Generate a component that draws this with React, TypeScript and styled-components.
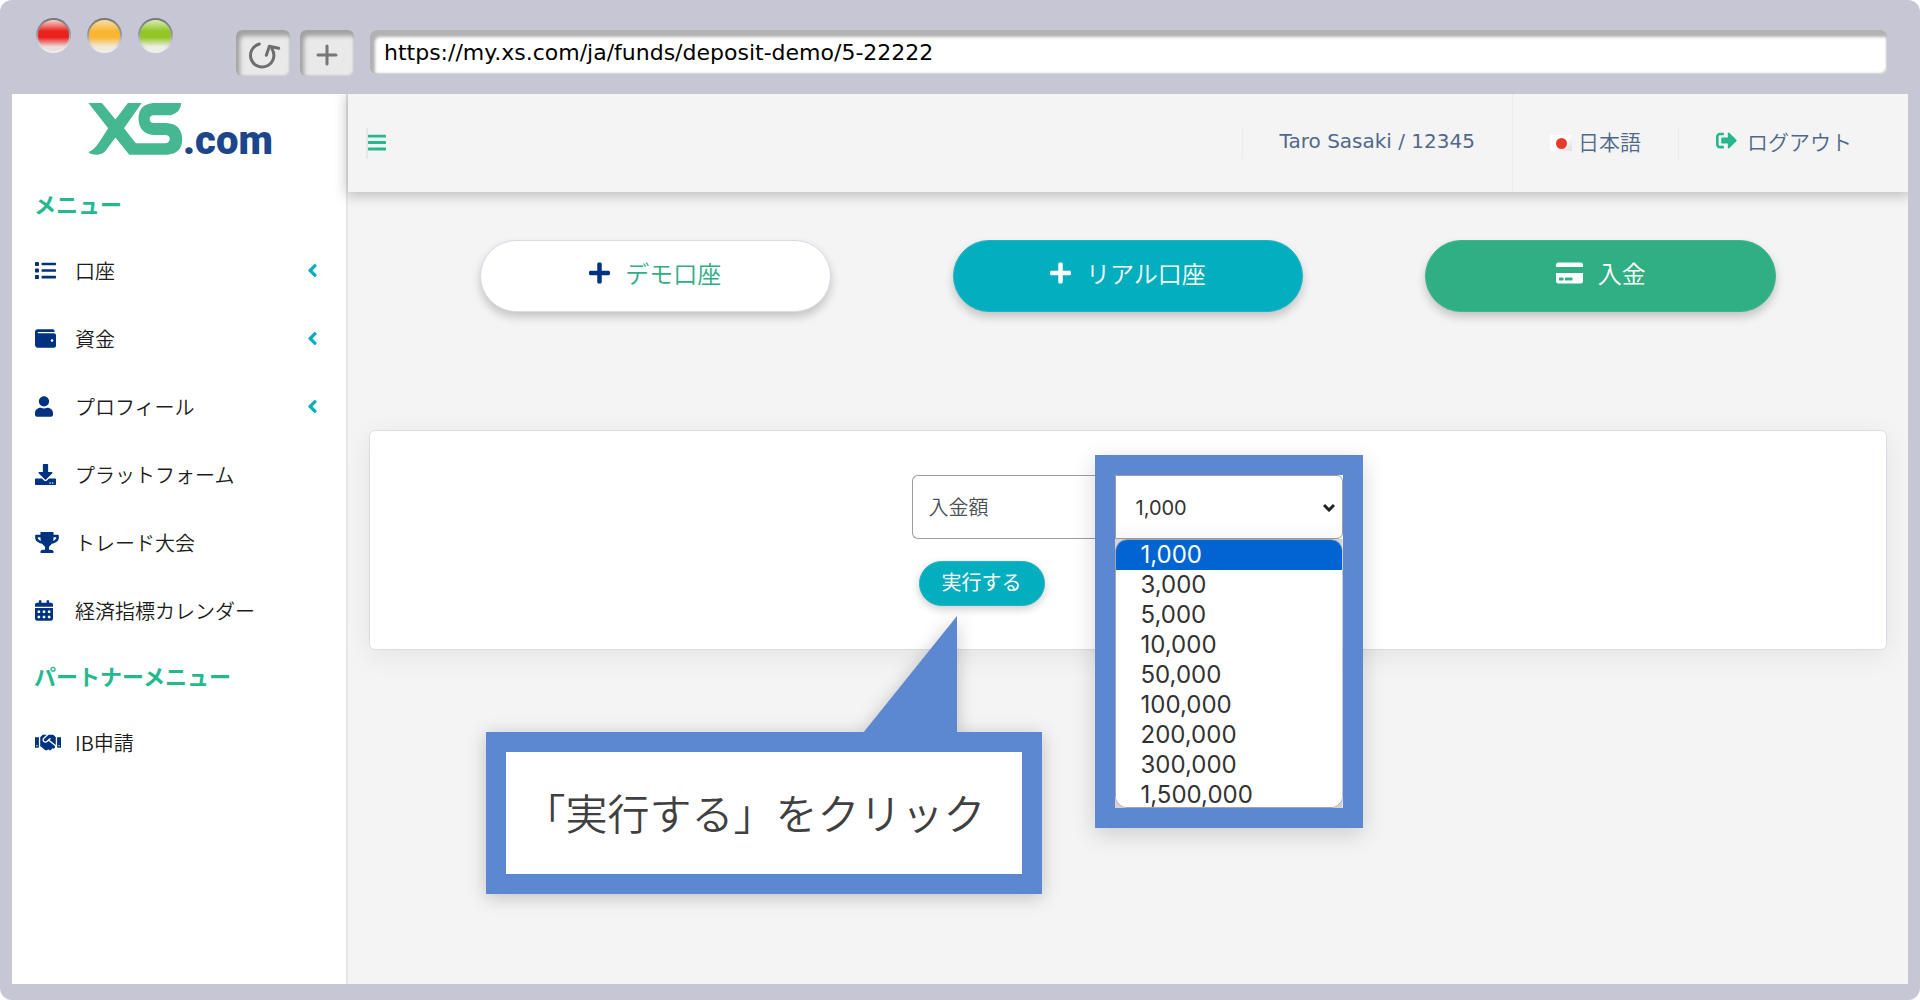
import React from "react";
import styled, { createGlobalStyle } from "styled-components";
import {
  FaAngleLeft,
  FaBars,
  FaCalendarAlt,
  FaCreditCard,
  FaDownload,
  FaHandshake,
  FaList,
  FaPlus,
  FaSignOutAlt,
  FaTrophy,
  FaUser,
  FaWallet,
} from "react-icons/fa";

const color = {
  chrome: "#c7c6d4",
  page: "#f4f4f4",
  line: "#e6e6e6",
  green: "#25b88f",
  pillGreen: "#30af84",
  teal: "#03aebf",
  navy: "#00337f",
  slate: "#51688a",
  callout: "#5c87d1",
};

const GlobalStyle = createGlobalStyle`
  *, *::before, *::after { box-sizing: border-box; }
  body {
    margin: 0;
    background: #fff;
    font-family: "DejaVu Sans", "Noto Sans CJK JP", sans-serif;
  }
  button, input, select { font: inherit; }
`;

const Browser = styled.div`
  display: flex;
  flex-direction: column;
  min-height: 100vh;
  padding: 0 12px 16px;
  background: ${color.chrome};
  border-radius: 12px;
`;

const Chrome = styled.div`
  display: flex;
  align-items: flex-start;
  height: 94px;
  padding: 18px 21px 0 24px;
`;

const Lights = styled.div`
  display: flex;
  gap: 16px;
  margin-right: 63px;
`;

const Light = styled.span<{ $top: string; $core: string; $low: string }>`
  width: 35px;
  height: 35px;
  border-radius: 50%;
  border: 2px solid transparent;
  background:
    linear-gradient(${(p) => `${p.$top}, ${p.$core} 36%, ${p.$core} 56%, ${p.$low} 86%`}) padding-box,
    linear-gradient(#777, #999 45%, #eee 90%) border-box;
`;

const ChromeButtons = styled.div`
  display: flex;
  gap: 10px;
  margin: 12px 16px 0 0;
`;

const ChromeButton = styled.button`
  display: grid;
  place-items: center;
  width: 54px;
  height: 46px;
  padding: 4px 0 0;
  border: 0;
  border-radius: 6px;
  background: #e9e9e9;
  box-shadow: inset 3px 5px 4px 1px #a2a2a4, inset -1px -1px 2px #cfcfd4;
`;

const Address = styled.input`
  flex: 1;
  min-width: 0;
  height: 44px;
  margin-top: 12px;
  padding: 0 14px;
  border: 0;
  border-radius: 6px;
  background: #fff;
  box-shadow: inset 4px 6px 3px 1px #b2b2b2, inset -1px -1px 2px #c8c8c8;
  color: #000;
  font-size: 22px;
`;

const Screen = styled.div`
  display: flex;
  flex: 1;
  overflow: hidden;
  background: ${color.page};
`;

const Sidebar = styled.aside`
  width: 336px;
  flex: none;
  background: #fff;
  border-right: 2px solid ${color.line};
`;

const Logo = styled.a`
  display: flex;
  align-items: flex-end;
  height: 78px;
  padding: 0 0 17px 76px;
  text-decoration: none;
`;

const Domain = styled.span`
  color: #1b468c;
  font-family: Roboto, "Open Sans", sans-serif;
  font-size: 40px;
  font-weight: 900;
  line-height: 28px;
`;

const MenuTitle = styled.h2`
  display: flex;
  align-items: center;
  height: 64px;
  margin: 0;
  padding: 0 0 3px 22px;
  color: ${color.green};
  font-size: 22px;
  font-weight: 700;
`;

const MenuLink = styled.a<{ $iconWidth: number }>`
  display: grid;
  grid-template-columns: 40px 1fr auto;
  align-items: center;
  height: 68px;
  padding: 0 28px 0 23px;
  color: #1c1c1c;
  font-family: "Noto Sans CJK JP", sans-serif;
  font-size: 20px;
  font-weight: 350;
  text-decoration: none;
  svg { height: 21px; }
  svg:first-child { width: ${(p) => p.$iconWidth}px; color: ${color.navy}; }
  svg:last-child { width: 11px; color: ${color.teal}; }
`;

const Content = styled.div`
  display: flex;
  flex-direction: column;
  flex: 1;
  min-width: 0;
`;

const Topbar = styled.header`
  position: relative;
  display: flex;
  align-items: center;
  height: 98px;
  padding-left: 18px;
  background: ${color.page};
  box-shadow: 0 2px 12px 2px rgba(0, 0, 0, 0.22);
  color: ${color.slate};
`;

const MenuToggle = styled.button`
  display: grid;
  place-items: center;
  height: 31px;
  margin-right: auto;
  padding: 0 0 1px;
  border: 0;
  border-left: 2px solid ${color.line};
  background: none;
  color: ${color.green};
  svg { width: 18px; height: 21px; }
`;

const BarItem = styled.div<{ $tall?: boolean }>`
  display: flex;
  align-items: center;
  height: ${(p) => (p.$tall ? "98px" : "31px")};
  padding: 0 37px 5px;
  border-left: 1px solid #ebebed;
  font-family: "Noto Sans CJK JP", sans-serif;
  font-size: 21px;
  font-weight: 350;
  white-space: nowrap;
`;

const Account = styled.span`
  font-family: "DejaVu Sans", sans-serif;
  font-size: 20px;
  font-weight: 400;
`;

const BarLink = styled.a`
  display: flex;
  align-items: center;
  gap: 10px;
  margin-right: 19px;
  color: inherit;
  text-decoration: none;
  svg { color: ${color.green}; }
`;

const Flag = styled.span`
  display: grid;
  place-items: center;
  width: 22px;
  height: 16px;
  margin: 5px 6px 0 0;
  background: linear-gradient(135deg, #fff 50%, #ddd);
  &::after {
    content: "";
    width: 11px;
    height: 11px;
    border-radius: 50%;
    background: #e63c28;
  }
`;

const Main = styled.main`
  flex: 1;
  padding: 48px 21px;
`;

const Actions = styled.div`
  display: grid;
  grid-template-columns: repeat(3, 1fr);
  margin: 0 50px 118px;
`;

const Pill = styled.button<{
  $bg: string;
  $fg: string;
  $icon: string;
  $iconWidth: number;
  $border: string;
}>`
  display: flex;
  align-items: center;
  justify-content: center;
  gap: 15px;
  height: 72px;
  margin: 0 61px;
  padding: 0 0 7px;
  border: 1px solid ${(p) => p.$border};
  border-radius: 36px;
  background: ${(p) => p.$bg};
  box-shadow: 0 5px 10px rgba(0, 0, 0, 0.2);
  color: ${(p) => p.$fg};
  font-family: "Noto Sans CJK JP", sans-serif;
  font-size: 24px;
  font-weight: 350;
  line-height: 36px;
  svg { width: ${(p) => p.$iconWidth}px; height: 24px; color: ${(p) => p.$icon}; }
`;

const Card = styled.section`
  display: flex;
  justify-content: center;
  padding: 44px 22px 43px 20px;
  border: 1px solid #dadce4;
  border-radius: 6px;
  background: #fff;
  box-shadow: 0 6px 28px rgba(0, 0, 0, 0.07);
`;

const Form = styled.form`
  position: relative;
  width: 431px;
`;

const Field = styled.div`
  display: flex;
  height: 64px;
`;

const FieldLabel = styled.label`
  display: flex;
  align-items: center;
  flex: 1;
  padding: 0 16px 2px;
  border: 1px solid #9c9c9c;
  border-right: 0;
  border-radius: 6px 0 0 6px;
  color: #495057;
  font-size: 20px;
  font-weight: 350;
`;

const SelectWrap = styled.div`
  position: relative;
  width: 228px;
`;

const Select = styled.select`
  width: 100%;
  height: 64px;
  padding: 2px 20px 0;
  border: 1px solid #9c9c9c;
  border-radius: 0 6px 6px 0;
  background: linear-gradient(#fff 78%, #f6f6f6);
  appearance: none;
  color: #333;
  font-family: Inter, sans-serif;
  font-size: 20px;
`;

const SelectArrow = styled.svg`
  position: absolute;
  top: 28px;
  right: 8px;
  pointer-events: none;
`;

const Highlight = styled.div`
  position: absolute;
  top: -20px;
  left: -20px;
  width: 268px;
  height: 373px;
  border: 20px solid ${color.callout};
  box-shadow: 0 6px 22px rgba(0, 0, 0, 0.16);
  pointer-events: none;
`;

const Options = styled.ul`
  position: absolute;
  top: 64px;
  left: 0;
  width: 228px;
  height: 269px;
  margin: 0;
  padding: 0;
  overflow: hidden;
  border: 1px solid #a4a4a4;
  border-radius: 12px;
  background: #fff;
  box-shadow: 0 0 0 6px #d4d4d4;
  clip-path: inset(0);
  list-style: none;
  font-family: Inter, sans-serif;
  font-size: 24px;
  line-height: 30px;
`;

const Option = styled.li<{ $active: boolean }>`
  padding-left: 25px;
  background: ${(p) => (p.$active ? "#0064d2" : "#fff")};
  color: ${(p) => (p.$active ? "#fff" : "#333")};
`;

const Submit = styled.button`
  height: 45px;
  margin: 22px 0 0 7px;
  padding: 0 22px 4px;
  border: 1px solid #25b5c2;
  border-radius: 23px;
  background: ${color.teal};
  box-shadow: 0 3px 8px rgba(0, 0, 0, 0.2);
  color: #fff;
  font-size: 20px;
  font-weight: 400;
`;

const Callout = styled.div`
  position: absolute;
  top: 257px;
  left: -426px;
  width: 556px;
  filter: drop-shadow(0 3px 9px rgba(0, 0, 0, 0.22));
`;

const CalloutBody = styled.p`
  height: 162px;
  margin: 0;
  padding: 30px 12px 0 18px;
  border: 20px solid ${color.callout};
  background: #fff;
  color: #404040;
  font-family: "Noto Sans CJK JP", sans-serif;
  font-size: 42px;
  font-weight: 350;
  line-height: 60px;
  white-space: nowrap;
`;

const CalloutTail = styled.svg`
  position: absolute;
  left: 377px;
  bottom: 161px;
`;

const menu = [
  { label: "口座", icon: FaList, iconWidth: 21, expandable: true },
  { label: "資金", icon: FaWallet, iconWidth: 21, expandable: true },
  { label: "プロフィール", icon: FaUser, iconWidth: 18, expandable: true },
  { label: "プラットフォーム", icon: FaDownload, iconWidth: 21, expandable: false },
  { label: "トレード大会", icon: FaTrophy, iconWidth: 24, expandable: false },
  { label: "経済指標カレンダー", icon: FaCalendarAlt, iconWidth: 18, expandable: false },
];

const partnerMenu = [{ label: "IB申請", icon: FaHandshake, iconWidth: 26, expandable: false }];

const amounts = [
  "1,000",
  "3,000",
  "5,000",
  "10,000",
  "50,000",
  "100,000",
  "200,000",
  "300,000",
  "1,500,000",
];

function MenuList({ items }: { items: typeof menu }) {
  return (
    <nav>
      {items.map(({ label, icon: Icon, iconWidth, expandable }) => (
        <MenuLink key={label} href="#" $iconWidth={iconWidth}>
          <Icon />
          <span>{label}</span>
          {expandable && <FaAngleLeft />}
        </MenuLink>
      ))}
    </nav>
  );
}

function XsMark() {
  return (
    <svg width="95" height="52" viewBox="264 308 286 158" aria-hidden="true">
      <path
        fill="#45b791"
        d="M546 308H462Q416 312 416 356Q418 402 462 405H496Q511 405 511 417Q511 430 498 430H408L372 385L426 308H384L346 358L305 308H264L324 385L296 428Q282 450 264 457Q270 465 290 465Q308 465 318 451L346 413L388 465H505Q549 462 549 417Q547 371 500 369H462Q450 368 450 357Q450 346 462 345H515Q545 336 546 308Z"
      />
    </svg>
  );
}

export default function App() {
  return (
    <>
      <GlobalStyle />
      <Browser>
        <Chrome>
          <Lights>
            <Light $top="#f2d5d0" $core="#ea211d" $low="#ecdcdc" />
            <Light $top="#f8dda6" $core="#f9b634" $low="#f0ead8" />
            <Light $top="#d8ecb4" $core="#92c726" $low="#ecf0e4" />
          </Lights>
          <ChromeButtons>
            <ChromeButton aria-label="再読み込み">
              <svg width="36" height="30" viewBox="740 120 108 90" fill="none" stroke="#6e6e6e" strokeWidth="9" strokeLinecap="round" strokeLinejoin="round">
                <path d="M783 132A35 35 0 1 0 821 147M804 166L813 139L841 145" />
              </svg>
            </ChromeButton>
            <ChromeButton aria-label="新しいタブ">
              <svg width="22" height="22" viewBox="0 0 22 22" stroke="#777" strokeWidth="3" strokeLinecap="round">
                <path d="M11 2V20M2 11H20" />
              </svg>
            </ChromeButton>
          </ChromeButtons>
          <Address aria-label="アドレス" defaultValue="https://my.xs.com/ja/funds/deposit-demo/5-22222" />
        </Chrome>
        <Screen>
          <Sidebar>
            <Logo href="#">
              <XsMark />
              <Domain>.com</Domain>
            </Logo>
            <MenuTitle>メニュー</MenuTitle>
            <MenuList items={menu} />
            <MenuTitle>パートナーメニュー</MenuTitle>
            <MenuList items={partnerMenu} />
          </Sidebar>
          <Content>
            <Topbar>
              <MenuToggle aria-label="メニューを開閉">
                <FaBars />
              </MenuToggle>
              <BarItem>
                <Account>Taro Sasaki / 12345</Account>
              </BarItem>
              <BarItem $tall>
                <Flag />
                日本語
              </BarItem>
              <BarItem>
                <BarLink href="#">
                  <FaSignOutAlt size={21} />
                  ログアウト
                </BarLink>
              </BarItem>
            </Topbar>
            <Main>
              <Actions>
                <Pill $bg="#fff" $fg="#2fae84" $icon={color.navy} $iconWidth={21} $border="#d9dae4">
                  <FaPlus />
                  デモ口座
                </Pill>
                <Pill $bg={color.teal} $fg="#fff" $icon="#fff" $iconWidth={21} $border="#1fb4c3">
                  <FaPlus />
                  リアル口座
                </Pill>
                <Pill $bg={color.pillGreen} $fg="#fff" $icon="#fff" $iconWidth={27} $border="#40b48d">
                  <FaCreditCard />
                  入金
                </Pill>
              </Actions>
              <Card>
                <Form onSubmit={(e) => e.preventDefault()}>
                  <Field>
                    <FieldLabel htmlFor="amount">入金額</FieldLabel>
                    <SelectWrap>
                      <Select id="amount" defaultValue="1,000">
                        {amounts.map((a) => (
                          <option key={a}>{a}</option>
                        ))}
                      </Select>
                      <SelectArrow width="12" height="9" viewBox="0 0 12 9" fill="none" stroke="#222" strokeWidth="3">
                        <path d="M1 2L6 7L11 2" />
                      </SelectArrow>
                      <Options role="listbox" aria-label="入金額">
                        {amounts.map((a, i) => (
                          <Option key={a} role="option" aria-selected={i === 0} $active={i === 0}>
                            {a}
                          </Option>
                        ))}
                      </Options>
                      <Highlight />
                    </SelectWrap>
                  </Field>
                  <Submit type="submit">実行する</Submit>
                  <Callout>
                    <CalloutBody>「実行する」をクリック</CalloutBody>
                    <CalloutTail width="94" height="117" viewBox="0 0 94 117">
                      <path d="M94 0V117H0Z" fill={color.callout} />
                    </CalloutTail>
                  </Callout>
                </Form>
              </Card>
            </Main>
          </Content>
        </Screen>
      </Browser>
    </>
  );
}
